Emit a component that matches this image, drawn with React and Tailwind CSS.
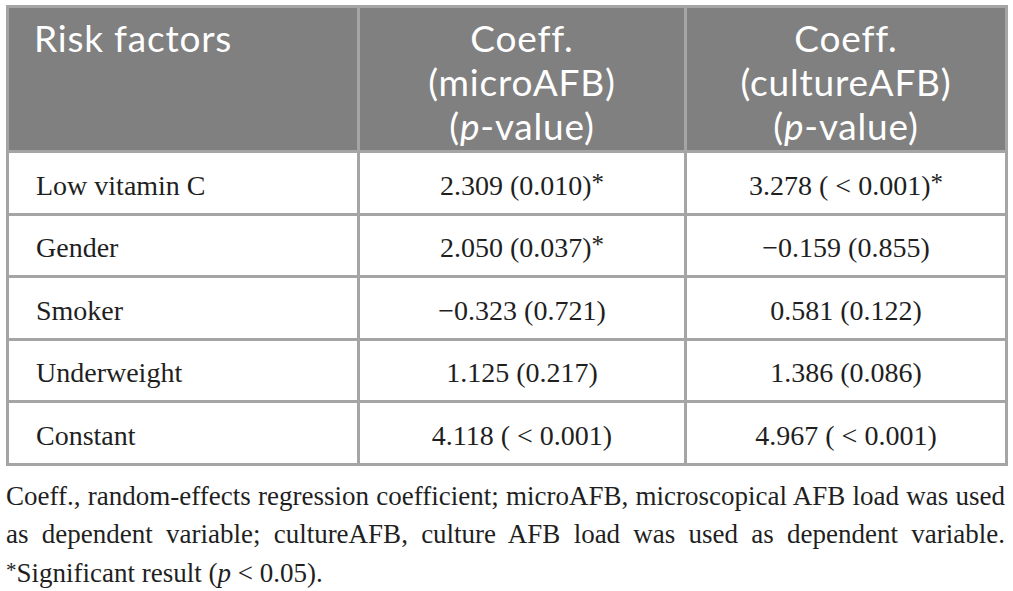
const rows = [
  ['Low vitamin C', '2.309 (0.010)*', '3.278 ( < 0.001)*'],
  ['Gender', '2.050 (0.037)*', '\u22120.159 (0.855)'],
  ['Smoker', '\u22120.323 (0.721)', '0.581 (0.122)'],
  ['Underweight', '1.125 (0.217)', '1.386 (0.086)'],
  ['Constant', '4.118 ( < 0.001)', '4.967 ( < 0.001)'],
]

const Star = ({ text }) => {
  if (!text.endsWith('*')) return text
  return (
    <>
      {text.slice(0, -1)}
      <span className="text-[25px] relative -top-[4px]">*</span>
    </>
  )
}

export default function App() {
  return (
    <div className="w-[1013px] h-[591px] bg-white pt-[5px] px-[6px] overflow-hidden">
      <table className="w-[999px] border-collapse border-[3px] border-[#a5a5a5] table-fixed">
        <colgroup>
          <col className="w-[351px]" />
          <col className="w-[327px]" />
          <col className="w-[321px]" />
        </colgroup>
        <thead>
          <tr className="h-[145px] bg-[#808080] text-white font-['Lato',sans-serif] text-[37px] leading-[44px] tracking-[0.8px]">
            <th className="align-top text-left font-normal pl-[25px] pt-[8px] border-[3px] border-[#a5a5a5]">
              Risk factors
            </th>
            <th className="align-top font-normal pt-[8px] border-[3px] border-[#a5a5a5]">
              Coeff.
              <br />
              (microAFB)
              <br />(<i>p</i>-value)
            </th>
            <th className="align-top font-normal pt-[8px] border-[3px] border-[#a5a5a5]">
              Coeff.
              <br />
              (cultureAFB)
              <br />(<i>p</i>-value)
            </th>
          </tr>
        </thead>
        <tbody className="font-['Liberation_Serif',serif] text-[28px] text-[#1f1f1f]">
          {rows.map((r) => (
            <tr key={r[0]} className="h-[62.5px]">
              <td className="pl-[27px] pt-[6px] border-[3px] border-[#a5a5a5]">{r[0]}</td>
              <td className="text-center pt-[6px] border-[3px] border-[#a5a5a5]">
                <Star text={r[1]} />
              </td>
              <td className="text-center pt-[6px] border-[3px] border-[#a5a5a5]">
                <Star text={r[2]} />
              </td>
            </tr>
          ))}
        </tbody>
      </table>
      <div className="mt-[11px] w-[999px] font-['Liberation_Serif',serif] text-[27px] leading-[38.5px] text-[#1f1f1f]">
        <p className="whitespace-nowrap text-justify [text-align-last:justify]">
          Coeff., random-effects regression coefficient; microAFB, microscopical AFB load was used
        </p>
        <p className="whitespace-nowrap text-justify [text-align-last:justify]">
          as dependent variable; cultureAFB, culture AFB load was used as dependent variable.
        </p>
        <p>
          <span className="text-[21px] relative -top-[5px]">*</span>Significant result (<i>p</i> &lt; 0.05).
        </p>
      </div>
    </div>
  )
}
